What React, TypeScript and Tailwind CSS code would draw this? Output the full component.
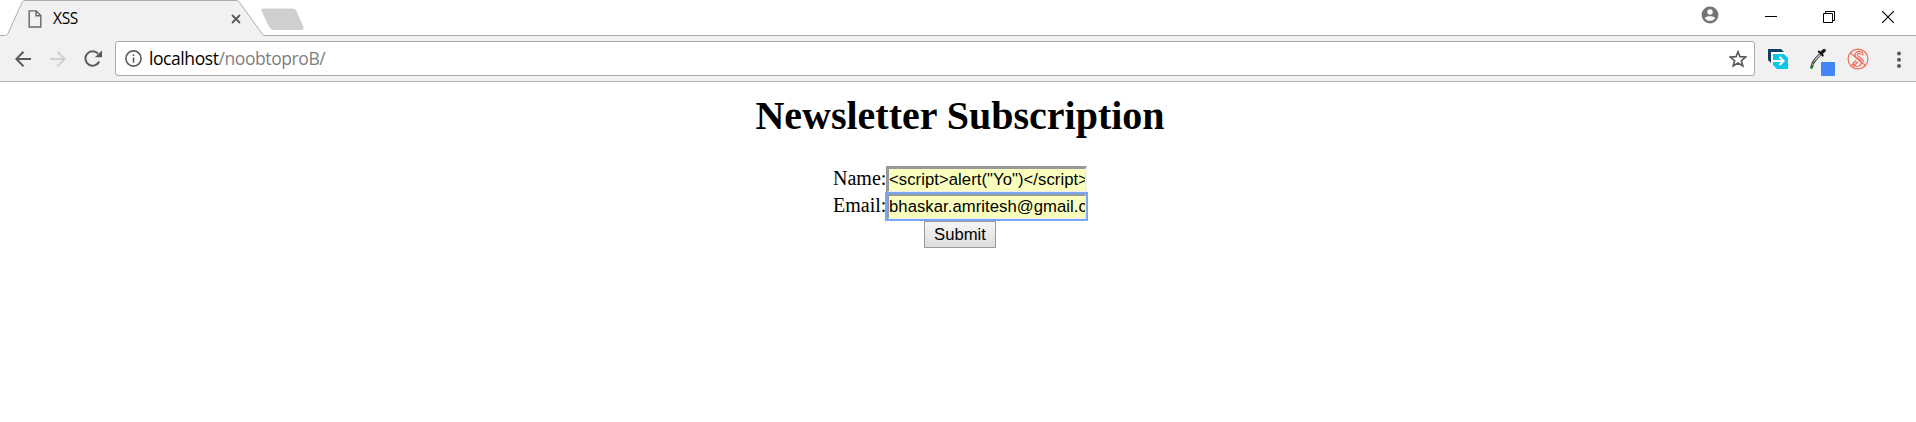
import React from "react";

function TabStrip() {
  return (
    <div className="flex h-9 items-start bg-white">
      <div className="relative h-9 w-[264px] shrink-0">
        <svg className="absolute inset-0" width="264" height="36" viewBox="0 0 264 36" fill="none">
          <path d="M7 36 L22 2.500 Q23 .5 25 .5 H236 Q238.500 .5 239.500 2.500 L264 36 Z" fill="#f1f1f1" />
          <path d="M0 35.500 H5.500 Q7 35.500 8 33.500 L22 2.500 Q23 .5 25 .5 H236 Q238.500 .5 239.500 2.500 L262 33.500 Q263 35.500 264 35.500" stroke="#adadad" />
        </svg>
        <div className="relative flex h-[38px] items-center pl-7">
          <svg width="14" height="18" viewBox="0 0 14 18" fill="none" stroke="#666" strokeWidth="1.400">
            <path d="M1.200 .9 H8.300 L12.800 5.500 V17 H1.200 Z M8 1 V5.800 H12.800" />
          </svg>
          <span className="ml-[11px] w-[178px] text-[15.500px] tracking-[-0.300px] text-black">XSS</span>
          <svg width="10" height="10" viewBox="0 0 10 10" stroke="#5a5a5a" strokeWidth="1.800">
            <path d="M1 1 L9 9 M9 1 L1 9" />
          </svg>
        </div>
      </div>
      <div className="flex h-9 flex-1 items-start justify-between border-b border-[#adadad]">
        <svg className="-ml-[4px]" width="46" height="35" viewBox="0 0 46 35">
          <path d="M3 9 H33 Q35 9 36 11 L43 27 Q44 29.500 41.500 29.500 H14 Q11 29.500 10 27.500 L2 11 Q1 9 3 9 Z" fill="#d0d0d0" stroke="#c4c4c4" strokeWidth=".7" />
        </svg>
        <div className="flex h-[34px] items-center">
          <svg className="-mt-1 mr-[46px]" width="18" height="18" viewBox="0 0 18 18">
            <circle cx="9" cy="9" r="8.400" fill="#737373" />
            <circle cx="9" cy="6" r="2.700" fill="white" />
            <path d="M3.800 12.300 C5 9.700 13 9.700 14.200 12.300 C12 15.700 6 15.700 3.800 12.300Z" fill="white" />
          </svg>
          <svg className="mr-[46px]" width="12" height="12" viewBox="0 0 12 12" stroke="black"><path d="M0 5.500 H12" /></svg>
          <svg className="mr-[47px]" width="12" height="12" viewBox="0 0 12 12" fill="none" stroke="black">
            <path d="M.5 2.500 H9.500 V11.500 H.5Z M2.500 2.500 V.5 H11.500 V9.500 H9.500" />
          </svg>
          <svg className="mr-[22px]" width="12" height="12" viewBox="0 0 12 12" stroke="black" strokeWidth="1.100">
            <path d="M0 0 L12 12 M12 0 L0 12" />
          </svg>
        </div>
      </div>
    </div>
  );
}

function Toolbar() {
  return (
    <div className="flex h-[46px] items-start border-b border-[#b4b4b4] bg-[#f1f1f1] pt-[5px]">
      <div className="flex h-[35px] w-[115px] shrink-0 items-center pl-[15px]">
        <svg width="16" height="16" viewBox="0 0 16 16" fill="none" stroke="#5a5a5a" strokeWidth="2">
          <path d="M16 8 H1.500 M8.500 .8 L1.300 8 L8.500 15.200" />
        </svg>
        <svg className="ml-[19px]" width="16" height="16" viewBox="0 0 16 16" fill="none" stroke="#d0d0d0" strokeWidth="2">
          <path d="M0 8 H14.500 M7.500 .8 L14.700 8 L7.500 15.200" />
        </svg>
        <svg className="ml-[18px]" width="18" height="17" viewBox="0 0 18 17" fill="none" stroke="#5a5a5a" strokeWidth="2">
          <path d="M15.200 11.500 A7.200 7.200 0 1 1 14 3.700" />
          <path d="M18 .5 V7.200 H10.800 Z" fill="#5a5a5a" stroke="none" />
        </svg>
      </div>
      <div className="flex h-[35px] w-[1640px] shrink-0 items-center rounded-[3px] border border-[#a9a9a9] bg-white pl-[9px] pr-[7px]">
        <svg width="17" height="17" viewBox="0 0 17 17" fill="none" stroke="#5f5f5f" strokeWidth="1.600">
          <circle cx="8.500" cy="8.500" r="7.600" />
          <path d="M8.500 7.500 V12.700 M8.500 4.200 V5.900" />
        </svg>
        <span className="ml-[7px] flex-1 whitespace-nowrap text-[17.500px] tracking-[-0.420px] text-black">
          localhost<span className="text-[#808080]">/noobtoproB/</span>
        </span>
        <svg width="18" height="18" viewBox="0 0 18 18" fill="none" stroke="#5a5a5a" strokeWidth="1.700">
          <path d="M9 1.800 L11 6.700 L16.600 7.100 L12.400 10.700 L13.800 16 L9 13.100 L4.200 16 L5.600 10.700 L1.400 7.100 L7 6.700 Z" />
        </svg>
      </div>
      <div className="flex h-[35px] flex-1 items-center">
        <svg className="ml-[13px]" width="21" height="22" viewBox="0 0 21 22">
          <path d="M0 1 H13 L16 4 H3 V15 L0 12Z" fill="#123f63" />
          <path d="M3 4 H16 L18 6 H6 V18 L3 15Z" fill="white" />
          <path d="M5 6 H16 L20 10 V21 H9 L5 17Z" fill="#08c8e8" />
          <path d="M4 13 H15 M11.500 9 L15.500 13 L11.500 17" fill="none" stroke="white" strokeWidth="2.200" />
        </svg>
        <svg className="ml-[20px] mt-[6px]" width="26" height="30" viewBox="0 0 26 30">
          <path d="M11 7.500 L5.500 13.500 Q3.500 15.500 3 19.500" stroke="#4a4a4a" strokeWidth="2.800" fill="none" />
          <path d="M11 7.500 L5.800 13.300 L3.600 18" stroke="#d5ddd6" strokeWidth="1.100" fill="none" />
          <path d="M7 13 L4 17" stroke="#287a36" strokeWidth="1.300" />
          <circle cx="2.500" cy="20.300" r="1.500" fill="#247033" />
          <path d="M9.800 4.500 L13.800 8.500" stroke="#151515" strokeWidth="2" strokeLinecap="round" />
          <path d="M12.500 5.800 L15.200 3.500" stroke="#151515" strokeWidth="3.400" strokeLinecap="round" />
          <rect x="12" y="15" width="14" height="14" rx="1" fill="#4285f4" />
        </svg>
        <svg className="ml-[12px]" width="22" height="22" viewBox="0 0 22 22" fill="none" stroke="#f26b58" strokeWidth="1.200">
          <circle cx="11" cy="11" r="9.900" />
          <path d="M16 7.500 C16.500 3.800 12.500 2.500 10 4 C6.500 6 8 9.500 11 10.500 C15.500 12 15.500 16.500 12 18 C9 19 6 17.500 6 14.500 M14 7 C13.500 4.500 10 5.500 10.500 7.500 C11 9 16.500 10 16.500 14 M3.500 5 L18.500 17.500 M4.500 17.500 L9 12.500 M6.500 18.500 L11 13.500" />
        </svg>
        <svg className="ml-[28px] mt-[2px]" width="4" height="18" viewBox="0 0 4 18" fill="#5a5a5a">
          <circle cx="2" cy="2.500" r="2" /><circle cx="2" cy="8.700" r="2" /><circle cx="2" cy="15" r="2" />
        </svg>
      </div>
    </div>
  );
}

const fieldClass =
  "h-[27px] w-[201px] border-t-[3px] border-r-2 border-b-2 border-l-[3px] border-t-[#9a9a9a] border-r-[#eeeeee] border-b-[#eeeeee] border-l-[#9a9a9a] bg-[#faffbd] font-['Liberation_Sans',sans-serif] text-[16.670px] tracking-[0.060px]";

export default function App() {
  return (
    <div className="h-[422px] w-[1916px] overflow-hidden bg-white font-['Open_Sans','Noto_Sans',sans-serif]">
      <TabStrip />
      <Toolbar />
      <main className="flex flex-col items-center pl-1 font-['Liberation_Serif',serif] text-black">
        <h1 className="mt-[11px] h-[46px] text-[40px] font-bold leading-[46px]">Newsletter Subscription</h1>
        <form className="mt-[27px] flex flex-col items-center" onSubmit={(e) => e.preventDefault()}>
          <label className="flex h-[27px] items-center text-[20px]">
            <span className="w-[53px] pb-[3px] leading-6">Name:</span>
            <input className={`${fieldClass} outline-none`} defaultValue={'<script>alert("Yo")</script>'} />
          </label>
          <label className="flex h-[27px] items-center text-[20px]">
            <span className="w-[53px] pb-[3px] leading-6">Email:</span>
            <input
              className={`${fieldClass} outline-2 -outline-offset-1 outline-[#7aa7f5]`}
              defaultValue="bhaskar.amritesh@gmail.com"
            />
          </label>
          <button className="mt-px h-[27px] w-[72px] border border-[#999] bg-linear-to-b from-[#f6f6f6] to-[#dddddd] font-['Liberation_Sans',sans-serif] text-[16.670px] leading-[24px]">
            Submit
          </button>
        </form>
      </main>
    </div>
  );
}
